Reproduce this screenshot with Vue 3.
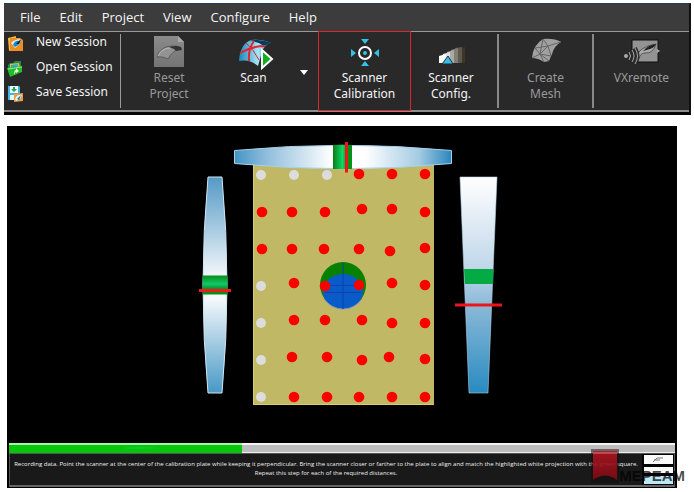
<script setup>
const menus = ['File', 'Edit', 'Project', 'View', 'Configure', 'Help']

const greyDots = [
  [261, 175], [294, 175], [327, 175], [261, 286], [261, 323], [261, 360], [261, 397],
]
const redDots = [
  [359, 174], [392, 174], [425, 174],
  [262, 212], [292, 212], [325, 212], [362, 209], [392, 209], [425, 212],
  [262, 249], [292, 249], [324, 249], [359, 249], [390, 251], [425, 248],
  [294, 283], [325, 286], [359, 285], [392, 283], [425, 285],
  [294, 320], [325, 320], [362, 320], [392, 323], [425, 323],
  [292, 357], [327, 357], [362, 360], [389, 357], [425, 359],
  [294, 397], [327, 397], [359, 397], [392, 397], [425, 397],
]
</script>

<template>
  <main class="page">
    <header class="app-bar">
      <nav class="menu">
        <button v-for="m in menus" :key="m" type="button" class="menu-item">{{ m }}</button>
      </nav>
      <div class="ribbon">
        <div class="session">
          <button type="button" class="session-item">
            <svg width="18" height="18" viewBox="0 0 18 18" aria-hidden="true">
              <path d="M2 3 10 1 9 15 3 16Z" fill="#ffb640" />
              <path d="M4 3H14L17 5V16H4Z" fill="#ef8d22" />
              <path d="M5 8Q9 4 15 4Q15 9 9 13Z" fill="#d5f2fb" />
              <path d="M7 10Q9 5 13 6L15 5Q14 10 9 12Z" fill="#168bc0" />
              <path d="M10 9 15 4 13 9Z" fill="#123" />
            </svg>
            <span>New Session</span>
          </button>
          <button type="button" class="session-item">
            <svg width="18" height="18" viewBox="0 0 18 18" aria-hidden="true">
              <path d="M2 5 4 3H7L9 1H15V9H2Z" fill="#188e55" />
              <path d="M4 4 13 3 14 8H4Z" fill="#f7b23e" />
              <path d="M5 5 12 4 11 8H5Z" fill="#2daad3" />
              <path d="M1 8 16 6V12L4 17Z" fill="#22bd27" />
              <path d="M2 9 16 7" stroke="#8bf184" />
              <path d="M8 15Q8 10 10 10V8L13 11 10 13V12Q9 12 8 15Z" fill="#eaffea" />
            </svg>
            <span>Open Session</span>
          </button>
          <button type="button" class="session-item">
            <svg width="18" height="18" viewBox="0 0 18 18" aria-hidden="true">
              <path d="M2 1H13L14 2V15H2Z" fill="#41b5df" />
              <path d="M4 1H12V8H4Z" fill="#eefaff" />
              <path d="M7 2H9V4H11L8 7 5 4H7Z" fill="#27a55b" />
              <path d="M4 10H9V15H4Z" fill="#e5f6ff" />
              <path d="M8 9 17 8V16L8 17Z" fill="#ef9b38" />
              <path d="M9 14Q11 9 16 10Q14 15 10 16Z" fill="#d9f7ff" />
              <path d="M11 14 15 10 13 15Z" fill="#197aa6" />
            </svg>
            <span>Save Session</span>
          </button>
        </div>

        <button type="button" class="tool reset" disabled>
          <svg width="40" height="34" viewBox="0 0 40 34" aria-hidden="true">
            <defs>
              <linearGradient id="sheet" x2="0" y2="1"><stop stop-color="#8b8b8b" /><stop offset="1" stop-color="#747474" /></linearGradient>
            </defs>
            <path d="M5 0H29L35 6V31H5Z" fill="url(#sheet)" />
            <path d="M29 0V6H35" fill="#aaa" />
            <path d="M8 21Q11 11 22 10Q28 9 32 12Q23 15 19 23Q13 20 8 21Z" fill="#939393" stroke="#5c5c5c" />
            <path d="M9 20Q13 12 21 12" fill="none" stroke="#bbb" />
            <path d="M20 11Q27 9 32 11L33 14 27 15 25 13Z" fill="#333" />
          </svg>
          <span>Reset<br>Project</span>
        </button>

        <button type="button" class="tool scan">
          <svg width="40" height="34" viewBox="0 0 40 34" aria-hidden="true">
            <defs>
              <linearGradient id="surf"><stop stop-color="#1687ba" /><stop offset=".6" stop-color="#a9e7f5" /><stop offset="1" stop-color="#167fb0" /></linearGradient>
            </defs>
            <path d="M5 25Q6 8 17 4Q28 3 37 7Q30 9 28 16L24 30Q16 23 5 25Z" fill="url(#surf)" />
            <path d="M15 5Q26 2 37 7L30 10Q24 5 15 5Z" fill="#073b5a" />
            <path d="M6 17Q18 10 31 10M20 5Q14 13 15 25" fill="none" stroke="#e42330" stroke-width="2" />
            <path d="M12 7Q20 14 25 24" fill="none" stroke="#e42330" />
            <path d="M28 14 38 23 28 32Z" fill="#12ad20" stroke="#fff" stroke-width="2" />
          </svg>
          <span>Scan</span>
        </button>
        <button type="button" class="drop" aria-label="Scan options">
          <svg width="10" height="5" viewBox="0 0 10 5" aria-hidden="true"><path d="M1 0H9L5 5Z" fill="#fff" /></svg>
        </button>

        <button type="button" class="tool calibrate">
          <svg width="40" height="34" viewBox="0 0 40 34" aria-hidden="true">
            <circle cx="20" cy="17" r="6" fill="none" stroke="#fff" stroke-width="2" />
            <circle cx="20" cy="17" r="2" fill="#31c4e8" />
            <path d="M16 3H24L20 8ZM16 30H24L20 25ZM6 13V21L11 17ZM34 13V21L29 17Z" fill="#31c4e8" />
          </svg>
          <span>Scanner<br>Calibration</span>
        </button>

        <button type="button" class="tool config">
          <svg width="40" height="34" viewBox="0 0 40 34" aria-hidden="true">
            <path d="M28 12 34 11V27H26Z" fill="#3c3627" />
            <path d="M24 12 31 11V27H22Z" fill="#5d584c" />
            <path d="M20 14 27 12V27H18Z" fill="#817e76" />
            <path d="M16 16 23 14V27H14Z" fill="#aaa" />
            <path d="M12 18 19 16V27H11Z" fill="#ddd" />
            <path d="M8 20 15 18V27H8Z" fill="#fff" />
            <path d="M11 28 17 20 22 28Z" fill="#31bfe7" stroke="#29292a" />
          </svg>
          <span>Scanner<br>Config.</span>
        </button>

        <button type="button" class="tool mesh" disabled>
          <svg width="40" height="34" viewBox="0 0 40 34" aria-hidden="true">
            <path d="M6 22Q7 9 17 3Q28 2 35 6Q28 10 26 18L23 25 18 26Q12 22 6 22Z" fill="#a0a0a0" />
            <path d="M6 22 14 18 23 25M9 12 14 18 17 3M9 12 22 10 14 18 18 26M17 3 22 10 35 6M22 10 25 20 14 18" fill="none" stroke="#666" />
          </svg>
          <span>Create<br>Mesh</span>
        </button>

        <button type="button" class="tool remote" disabled>
          <svg width="40" height="34" viewBox="0 0 40 34" aria-hidden="true">
            <rect x="10" y="4" width="26" height="22" fill="#939393" stroke="#111" />
            <path d="M14 22Q16 11 34 8Q31 18 23 17Q18 17 17 23Z" fill="#aaa" stroke="#555" />
            <path d="M21 15Q26 9 34 8Q32 12 28 13Z" fill="#222" />
            <circle cx="4" cy="20" r="2" fill="#aaa" />
            <path d="M7 16Q10 20 7 24M10 14Q14 20 10 26M13 12Q18 20 13 28" fill="none" stroke="#292929" stroke-width="4" />
            <path d="M7 16Q10 20 7 24M10 14Q14 20 10 26M13 12Q18 20 13 28" fill="none" stroke="#aaa" />
            <path d="M35 13 38 15 35 17Z" fill="#aaa" />
          </svg>
          <span>VXremote</span>
        </button>
      </div>
    </header>

    <section class="viewer">
      <svg class="scene" viewBox="9 128 666 315" role="img" aria-label="Calibration plate">
        <defs>
          <linearGradient id="top"><stop stop-color="#4294c6" /><stop offset=".15" stop-color="#92bedc" /><stop offset=".45" stop-color="#fff" /><stop offset=".6" stop-color="#fff" /><stop offset=".85" stop-color="#a4cbe3" /><stop offset="1" stop-color="#2985bd" /></linearGradient>
          <linearGradient id="left" x2="0" y2="1"><stop stop-color="#559ac5" /><stop offset=".45" stop-color="#eff5fa" /><stop offset=".56" stop-color="#f5f9fc" /><stop offset="1" stop-color="#4898c6" /></linearGradient>
          <linearGradient id="right" x2="0" y2="1"><stop stop-color="#fff" /><stop offset=".42" stop-color="#c0d7e9" /><stop offset=".6" stop-color="#89b8d7" /><stop offset="1" stop-color="#288bc0" /></linearGradient>
          <linearGradient id="markH"><stop stop-color="#087d15" /><stop offset=".5" stop-color="#0bd968" /><stop offset=".75" stop-color="#078f20" /><stop offset="1" stop-color="#079116" /></linearGradient>
          <linearGradient id="markV" x2="0" y2="1"><stop stop-color="#078b19" /><stop offset=".45" stop-color="#10ca64" /><stop offset=".75" stop-color="#078427" /><stop offset="1" stop-color="#069017" /></linearGradient>
        </defs>
        <rect x="253" y="160" width="181" height="245" fill="#c1b866" />
        <path d="M253.500 165V404.500H433" fill="none" stroke="#d8cd78" />
        <path d="M234.500 150.500Q343 140 451.500 150.500V163.500Q343 174 234.500 163.500Z" fill="url(#top)" stroke="#a5d1ea" />
        <rect x="333" y="145" width="19" height="24" fill="url(#markH)" />
        <path d="M346.500 142V172.500" stroke="#f01515" stroke-width="3" />
        <path d="M208 177H222Q232 286 222 393H208Q198 286 208 177Z" fill="url(#left)" stroke="#d1e6f3" />
        <rect x="202.500" y="275.500" width="25" height="19" fill="url(#markV)" />
        <path d="M199 290.500H231" stroke="#f01818" stroke-width="3" />
        <path d="M460 177H497L488 393H469Z" fill="url(#right)" stroke="#b6d9ed" stroke-opacity=".55" />
        <path d="M464 269H493.500L493 284H465Z" fill="#04aa43" />
        <path d="M455 305H502" stroke="#ed151c" stroke-width="3" />
        <circle cx="343" cy="285" r="23" fill="#088000" />
        <ellipse cx="343" cy="291.500" rx="20" ry="17.500" fill="#095cc8" />
        <path d="M324 299A23 23 0 0 0 362 299" fill="none" stroke="#8593bf" />
        <path d="M343 263V309M325 285.500H361M325 292.500H361" stroke="#103fb0" />
        <circle v-for="([x, y], i) in greyDots" :key="'g' + i" :cx="x" :cy="y" r="5" fill="#dcdcdc" />
        <circle v-for="([x, y], i) in redDots" :key="'r' + i" :cx="x" :cy="y" r="5.300" fill="#fb0000" />
      </svg>

      <div class="progress" role="progressbar" aria-label="Recording" aria-valuenow="35" aria-valuemin="0" aria-valuemax="100">
        <div class="progress-fill"></div>
      </div>
      <div class="status">
        <p class="message">Recording data. Point the scanner at the center of the calibration plate while keeping it perpendicular. Bring the scanner closer or farther to the plate to align and match the highlighted white projection with the green square. Repeat this step for each of the required distances.</p>
        <svg width="32" height="31" viewBox="0 0 32 31" aria-hidden="true">
          <rect width="32" height="31" fill="#050505" />
          <path d="M2 1H31V10H2ZM2 13H31V19H2Z" fill="#fafafa" />
          <path d="M2 22H31V30H2Z" fill="#bde8f5" />
          <path d="M11 8 15 4H21M12 6H18" fill="none" stroke="#777" />
        </svg>
      </div>
      <div class="watermark">
        <svg width="28" height="34" viewBox="0 0 28 34" aria-hidden="true">
          <defs><linearGradient id="ribbonRed" x2="0" y2="1"><stop stop-color="#ba1521" /><stop offset="1" stop-color="#850b15" /></linearGradient></defs>
          <path d="M0 0H28V34H0Z" fill="#14090b" fill-opacity=".5" />
          <path d="M2 2H26V31Q14 22 2 31Z" fill="url(#ribbonRed)" fill-opacity=".85" />
          <path d="M2 4H26" stroke="#c77d82" />
        </svg>
        <span>MEPEAM</span>
      </div>
    </section>
  </main>
</template>

<style>
body { margin: 0; background: #fff; }
</style>

<style scoped>
.page { padding: 3px 3px 4px 4px; font-family: "Noto Sans", "Open Sans", sans-serif; }
button { margin: 0; padding: 0; border: 0; background: none; font: inherit; color: #f4f4f4; }
svg { display: block; flex: none; }
.app-bar { background: #29292a; border-top: 1px solid #17435a; border-right: 2px solid #111; border-bottom: 3px solid #050505; }
.menu { display: flex; gap: 19px; box-sizing: border-box; height: 28px; padding: 0 16px 2px; align-items: center; background: #3c3c3c; border-bottom: 1px solid #999; font-family: "Open Sans", sans-serif; font-size: 13px; line-height: 18px; }
.ribbon { display: flex; height: 78px; border-bottom: 2px solid #8d8d8d; }
.session { display: flex; flex-direction: column; width: 114px; padding-left: 2px; }
.session-item { display: flex; align-items: center; gap: 12px; height: 25px; font-size: 12px; line-height: 16px; white-space: nowrap; }
.session-item svg { margin-bottom: 2px; }
.session-item span { padding-bottom: 6px; }
.tool { display: flex; flex-direction: column; align-items: center; padding-top: 4px; font-size: 12px; line-height: 16px; text-align: center; }
.tool:disabled { color: #999; }
.reset { width: 97px; margin: 2px 0; padding-top: 2px; border-left: 1px solid #999; }
.scan { width: 73px; }
.drop { width: 28px; display: flex; justify-content: center; padding-top: 38px; }
.calibrate { width: 93px; margin: -1px 0; border: 1px solid #d9282d; }
.config { width: 86px; padding-right: 6px; }
.mesh { width: 95px; margin: 2px 0; padding-top: 2px; border-left: 2px solid #888; }
.remote { flex: 1; margin: 2px 0; padding-top: 2px; border-left: 2px solid #888; }
.viewer { position: relative; margin: 11px 14px 0 3px; padding: 2px 2px 1px; background: #000; }
.scene { width: 100%; height: auto; }
.progress { height: 10px; background: linear-gradient(#f2f2f2 0 2px, #bdbdbd 2px 9px, #eee 9px); }
.progress-fill { width: 35%; height: 100%; background: linear-gradient(#a8f1aa 0 2px, transparent 2px), radial-gradient(ellipse at 56% 50%, #12d761 0, #05c60b 12%); }
.status { display: flex; background: #191919; border: 1px solid #555; border-bottom: 2px solid #666; }
.message { flex: 1; margin: 0; padding-top: 6px; color: #eee; font-family: "Open Sans", sans-serif; font-size: 6px; line-height: 9px; text-align: center; }
.watermark { position: absolute; right: -8px; bottom: 5px; display: flex; align-items: flex-end; font: bold 15px/14px "Liberation Sans", sans-serif; color: rgba(0, 0, 0, .72); }
</style>
